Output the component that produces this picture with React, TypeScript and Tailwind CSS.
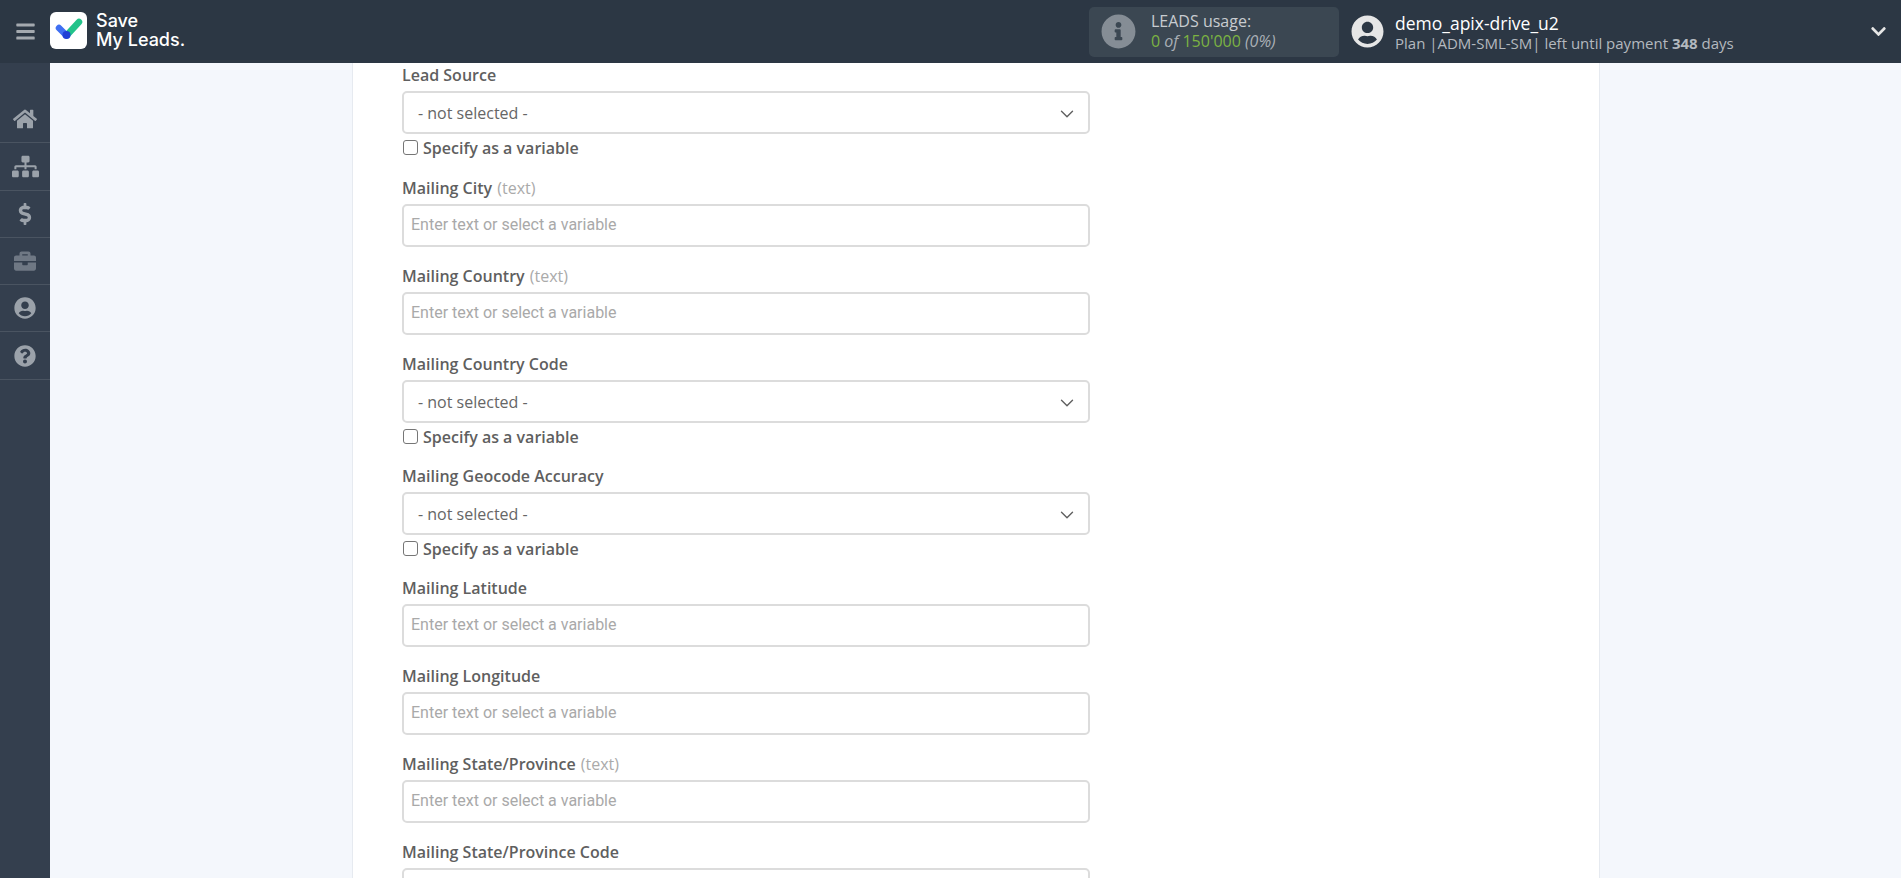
import {
  FaBars,
  FaBriefcase,
  FaChevronDown,
  FaDollarSign,
  FaHome,
  FaInfoCircle,
  FaQuestionCircle,
  FaSitemap,
  FaUserCircle,
} from "react-icons/fa";
import { ChevronDown } from "lucide-react";

const sidebarItems = [
  { Icon: FaHome, size: 24, cls: "text-[#9ba2aa]" },
  { Icon: FaSitemap, size: 27, cls: "text-[#9ba2aa]" },
  { Icon: FaDollarSign, size: 22, cls: "text-[#9ba2aa]" },
  { Icon: FaBriefcase, size: 22, cls: "text-[#6f7884]" },
  { Icon: FaUserCircle, size: 22, cls: "text-[#9ba2aa]" },
  { Icon: FaQuestionCircle, size: 22, cls: "text-[#9ba2aa]" },
];

function Label({ text, hint }: { text: string; hint?: boolean }) {
  return (
    <div className="h-[20px] leading-[20px] text-[16px] font-semibold text-[#5f5f5f]">
      {text}
      {hint ? <span className="ml-[1px] font-normal text-[#aaaaaa]"> (text)</span> : null}
    </div>
  );
}

function TextField({ label, hint }: { label: string; hint?: boolean }) {
  return (
    <div className="h-[88px]">
      <Label text={label} hint={hint} />
      <input
        readOnly
        placeholder="Enter text or select a variable"
        className="mt-[6px] block w-[688px] h-[43px] border-2 border-[#dcdcdc] rounded-[5px] bg-white pl-[7px] pr-[8px] pb-[2px] text-[16px] font-['Roboto',sans-serif] outline-none placeholder:text-[#a9a9a9]"
      />
    </div>
  );
}

function SelectField({ label }: { label: string }) {
  return (
    <div className="h-[112px]">
      <Label text={label} />
      <div className="mt-[6px] flex items-center justify-between w-[688px] h-[43px] border-2 border-[#dcdcdc] rounded-[5px] bg-white pl-[14px] pr-[10px] text-[16px] text-[#666666]">
        <span>- not selected -</span>
        <ChevronDown size={22} strokeWidth={1.5} className="text-[#5f5f5f] mt-[2px]" />
      </div>
      <label className="mt-[4px] flex items-center h-[20px] text-[16px] font-semibold text-[#5f5f5f]">
        <span className="w-[15px] h-[15px] ml-[1px] mr-[5px] -mt-[2px] border border-[#767676] rounded-[3px] bg-white" />
        Specify as a variable
      </label>
    </div>
  );
}

export default function App() {
  return (
    <div className="w-[1901px] h-[878px] overflow-hidden flex flex-col bg-[#f4f7fc] font-['Open_Sans',sans-serif]">
      <header className="h-[63px] shrink-0 flex items-center bg-[#2c3744]">
        <button className="w-[50px] flex justify-center text-[#a4a9af]">
          <FaBars size={21} />
        </button>
        <div className="w-[37px] h-[37px] -mt-[3px] rounded-[6px] bg-white flex items-center justify-center">
          <svg width="29" height="24" viewBox="0 0 29 24" fill="none">
            <path d="M25 4 L13 17" stroke="#22c38a" strokeWidth="6.5" strokeLinecap="round" />
            <path d="M5 10 L12 17" stroke="#3f6ff2" strokeWidth="6.5" strokeLinecap="round" />
            <circle cx="12.5" cy="17" r="4" fill="#1f3fd6" />
          </svg>
        </div>
        <div className="ml-[9px] -mt-[3px] font-['Inter',sans-serif] font-medium text-[18px] leading-[19px] text-white">
          <div>Save</div>
          <div>My Leads.</div>
        </div>
        <div className="ml-auto mr-[12px] w-[250px] h-[50px] rounded-[5px] bg-[#3b4752] flex items-center pl-[12px]">
          <FaInfoCircle size={35} className="text-[#858d95]" />
          <div className="ml-[15px] -mt-[2px] text-[16px] leading-[20px]">
            <div className="text-[#c8ccd0]">LEADS usage:</div>
            <div className="text-[#7cb342]">
              0 <i className="text-[#aab0b6]">of</i> 150'000{" "}
              <i className="text-[#aab0b6]">(0%)</i>
            </div>
          </div>
        </div>
        <FaUserCircle size={33} className="text-[#e6e6e6]" />
        <div className="ml-[11px] w-[475px] mt-[2px] leading-[20px]">
          <div className="text-[17.5px] text-white">demo_apix-drive_u2</div>
          <div className="text-[15px] text-[#b4b9bf]">
            Plan |ADM-SML-SM| left until payment <b>348</b> days
          </div>
        </div>
        <FaChevronDown size={17} className="text-[#e6e6e6] mr-[14px]" />
      </header>
      <div className="flex flex-1 min-h-0">
        <aside className="w-[50px] shrink-0 pt-[33px] bg-[#343f4e]">
          {sidebarItems.map(({ Icon, size, cls }, i) => (
            <div
              key={i}
              className="h-[47.3px] flex items-center justify-center border-b border-[#4a5461]"
            >
              <Icon size={size} className={cls} />
            </div>
          ))}
        </aside>
        <main className="flex-1 min-w-0 pl-[302px]">
          <div className="w-[1248px] h-full overflow-hidden bg-white border-x border-[#e6eaf0] pl-[49px] pt-[2px]">
            <div className="pb-[1px]">
              <SelectField label="Lead Source" />
            </div>
            <TextField label="Mailing City" hint />
            <TextField label="Mailing Country" hint />
            <SelectField label="Mailing Country Code" />
            <SelectField label="Mailing Geocode Accuracy" />
            <TextField label="Mailing Latitude" />
            <TextField label="Mailing Longitude" />
            <TextField label="Mailing State/Province" hint />
            <TextField label="Mailing State/Province Code" />
          </div>
        </main>
      </div>
    </div>
  );
}
